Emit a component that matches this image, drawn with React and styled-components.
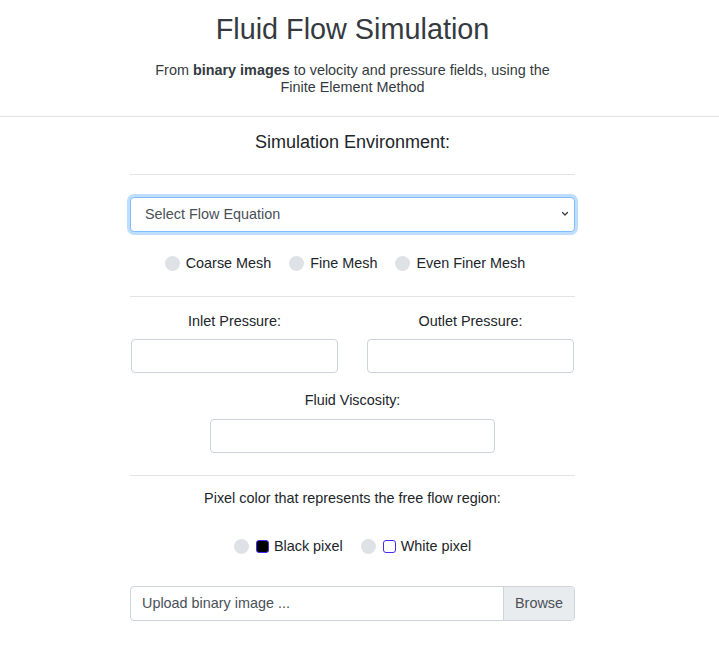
import styled, { createGlobalStyle } from 'styled-components';

const GlobalStyle = createGlobalStyle`
  * { box-sizing: border-box; }
  body {
    margin: 0;
    background: #fff;
    font-family: "Liberation Sans", Arial, sans-serif;
    font-size: 14.4px;
    line-height: 1.2;
    color: #212529;
  }
`;

export default function App() {
  return (
    <Page>
      <GlobalStyle />
      <Header>
        <Title>Fluid Flow Simulation</Title>
        <Subtitle>
          From <b>binary images</b> to velocity and pressure fields, using the
          <br />
          Finite Element Method
        </Subtitle>
      </Header>
      <FullRule />
      <Container>
        <SectionTitle>Simulation Environment:</SectionTitle>
        <Rule $top={20} $bottom={22} />
        <Select defaultValue="">
          <option value="">Select Flow Equation</option>
          <option value="stokes">Stokes Flow</option>
          <option value="ns">Navier-Stokes</option>
        </Select>
        <RadioRow $top={23} $shift={15}>
          <RadioItem>
            <Radio type="radio" name="mesh" />
            Coarse Mesh
          </RadioItem>
          <RadioItem>
            <Radio type="radio" name="mesh" />
            Fine Mesh
          </RadioItem>
          <RadioItem>
            <Radio type="radio" name="mesh" />
            Even Finer Mesh
          </RadioItem>
        </RadioRow>
        <Rule $top={24} $bottom={16} />
        <TwoCols>
          <Field>
            <Label>Inlet Pressure:</Label>
            <TextInput />
          </Field>
          <Field>
            <Label>Outlet Pressure:</Label>
            <TextInput />
          </Field>
        </TwoCols>
        <Field $narrow>
          <Label>Fluid Viscosity:</Label>
          <TextInput />
        </Field>
        <Rule $top={22} $bottom={14} />
        <Label>Pixel color that represents the free flow region:</Label>
        <RadioRow $top={31}>
          <RadioItem>
            <Radio type="radio" name="pixel" />
            <Swatch $color="#000" />
            Black pixel
          </RadioItem>
          <RadioItem>
            <Radio type="radio" name="pixel" />
            <Swatch $color="#fff" />
            White pixel
          </RadioItem>
        </RadioRow>
        <FileInput>
          <FileText>Upload binary image ...</FileText>
          <BrowseButton>Browse</BrowseButton>
        </FileInput>
      </Container>
    </Page>
  );
}

const Page = styled.div`
  padding-right: 14px;
`;

const Header = styled.header`
  padding-top: 12px;
  text-align: center;
`;

const Title = styled.h1`
  margin: 0;
  font-size: 28.8px;
  font-weight: 400;
  line-height: 1.2;
  color: #343a40;
`;

const Subtitle = styled.p`
  margin: 15px 0 0;
  font-size: 14.4px;
  color: #343a40;
  b {
    font-weight: 700;
  }
`;

const FullRule = styled.hr`
  margin: 20px -14px 0 0;
  border: 0;
  border-top: 1px solid #e2e2e2;
`;

const Container = styled.main`
  width: 445px;
  margin: 0 auto;
  padding: 15px 0 40px;
  text-align: center;
`;

const SectionTitle = styled.h2`
  margin: 0;
  font-size: 18px;
  font-weight: 400;
  line-height: 1.2;
  color: #212529;
`;

const Rule = styled.hr`
  margin: ${(p) => p.$top}px 0 ${(p) => p.$bottom}px;
  border: 0;
  border-top: 1px solid #e4e4e4;
`;

const Select = styled.select`
  display: block;
  width: 100%;
  height: 35px;
  padding: 0 36px 0 14px;
  font-family: inherit;
  font-size: 14.4px;
  color: #495057;
  background: #fff
    url("data:image/svg+xml,%3csvg xmlns='http://www.w3.org/2000/svg' viewBox='0 0 16 16'%3e%3cpath fill='none' stroke='%23343a40' stroke-linecap='round' stroke-linejoin='round' stroke-width='2.4' d='M3 5l5 5 5-5'/%3e%3c/svg%3e")
    no-repeat right 4px center / 10px 8px;
  border: 1px solid #80bdff;
  border-radius: 4px;
  box-shadow: 0 0 0 3px rgba(0, 123, 255, 0.25);
  appearance: none;
  outline: none;
`;

const RadioRow = styled.div`
  display: flex;
  justify-content: center;
  gap: 18px;
  margin-top: ${(p) => p.$top}px;
  padding-right: ${(p) => p.$shift || 0}px;
`;

const RadioItem = styled.label`
  display: flex;
  align-items: center;
  gap: 6px;
  font-size: 14.4px;
  color: #212529;
`;

const Radio = styled.input`
  appearance: none;
  width: 15px;
  height: 15px;
  margin: 0;
  border-radius: 50%;
  background: #dee2e6;
  &:checked {
    background: #007bff;
    box-shadow: inset 0 0 0 4px #007bff, inset 0 0 0 8px #fff;
  }
`;

const Swatch = styled.span`
  width: 13px;
  height: 13px;
  margin-left: 1px;
  margin-right: -1px;
  border: 1px solid #3d2ef0;
  border-radius: 3px;
  background: ${(p) => p.$color};
`;

const TwoCols = styled.div`
  display: grid;
  grid-template-columns: 207px 207px;
  justify-content: center;
  column-gap: 29px;
`;

const Field = styled.div`
  display: flex;
  flex-direction: column;
  align-items: center;
  gap: 9px;
  width: ${(p) => (p.$narrow ? '285px' : 'auto')};
  margin: ${(p) => (p.$narrow ? '19px auto 0' : '0')};
`;

const Label = styled.div`
  font-size: 14.4px;
  color: #212529;
`;

const TextInput = styled.input`
  width: 100%;
  height: 34px;
  border: 1px solid #ced4da;
  border-radius: 4px;
  background: #fff;
  font-family: inherit;
  font-size: 14.4px;
  outline: none;
`;

const FileInput = styled.div`
  display: flex;
  height: 35px;
  margin-top: 31px;
  border: 1px solid #ced4da;
  border-radius: 4px;
  overflow: hidden;
  text-align: left;
`;

const FileText = styled.div`
  flex: 1;
  display: flex;
  align-items: center;
  padding-left: 11px;
  font-size: 14.4px;
  color: #495057;
`;

const BrowseButton = styled.div`
  display: flex;
  align-items: center;
  padding: 0 11px;
  background: #e9ecef;
  border-left: 1px solid #ced4da;
  font-size: 14.4px;
  color: #495057;
`;
